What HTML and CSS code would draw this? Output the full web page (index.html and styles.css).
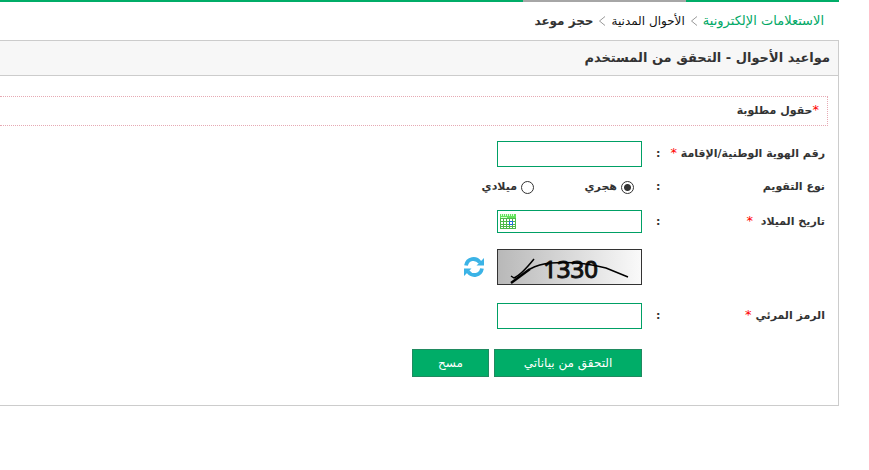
FILE: index.html
```html
<!DOCTYPE html>
<html lang="ar" dir="rtl">
<head>
<meta charset="utf-8">
<title>حجز موعد</title>
<link rel="stylesheet" href="styles.css">
</head>
<body>
<div class="page">
  <div class="nav-line"><span class="nav-first"></span><span class="nav-current"></span><span class="nav-rest"></span></div>
  <nav class="breadcrumb">
    <a class="crumb-root" href="#">الاستعلامات الإلكترونية</a>
    <svg class="chevron" viewBox="0 0 6 10"><path d="M6 0.5 0.5 5 6 9.5"/></svg>
    <a class="crumb-link" href="#">الأحوال المدنية</a>
    <svg class="chevron" viewBox="0 0 6 10"><path d="M6 0.5 0.5 5 6 9.5"/></svg>
    <span class="crumb-current">حجز موعد</span>
  </nav>
  <main class="panel">
    <h1 class="title">مواعيد الأحوال - التحقق من المستخدم</h1>
    <p class="notice"><span class="star">*</span>حقول مطلوبة</p>
    <form class="form">
      <div class="row">
        <label class="label" for="id-number"><span>رقم الهوية الوطنية/الإقامة <span class="star">*</span></span><span>:</span></label>
        <input class="field" id="id-number" type="text">
      </div>
      <div class="row row-radio" role="radiogroup" aria-labelledby="calendar-label">
        <span class="label" id="calendar-label"><span>نوع التقويم</span><span>:</span></span>
        <div class="radios">
          <label class="option"><input class="radio" type="radio" name="calendar" checked>هجري</label>
          <label class="option"><input class="radio" type="radio" name="calendar">ميلادي</label>
        </div>
      </div>
      <div class="row row-date">
        <label class="label" for="birth-date"><span>تاريخ الميلاد <span class="star star-spaced">*</span></span><span>:</span></label>
        <div class="date-box">
          <input class="date-input" id="birth-date" type="text">
          <button class="icon-button" type="button" aria-label="التقويم">
            <svg width="16" height="16" viewBox="0 0 16 16" shape-rendering="crispEdges">
              <path fill="#4eb84a" d="M0 0h16v15H0z"/>
              <path fill="#63e35c" d="M0 0h16v4H0z"/>
              <path fill="#d9ffd5" d="M1 0h1v2H1zM3 0h1v2H3zM5 0h1v2H5zM7 0h1v2H7zM9 0h1v2H9zM11 0h1v2h-1zM13 0h1v2h-1zM1 3h6v1H1z"/>
              <path fill="#fff" d="M1 5h2v2H1zM4 5h2v2H4zM7 5h2v2H7zM10 5h2v2h-2zM13 5h2v2h-2zM1 8h2v2H1zM4 8h2v2H4zM7 8h2v2H7zM10 8h2v2h-2zM13 8h2v2h-2zM1 11h2v1H1zM4 11h2v1H4zM7 11h2v1H7zM10 11h2v1h-2zM13 11h2v1h-2zM1 13h2v1H1zM4 13h2v1H4zM7 13h2v1H7zM10 13h2v1h-2zM13 13h2v1h-2z"/>
              <path fill="none" stroke="#246bdc" d="M9.500 7.500h3v3h-3z"/>
            </svg>
          </button>
        </div>
      </div>
      <div class="row row-captcha">
        <span class="label"></span>
        <svg class="captcha" viewBox="0 0 145 36" role="img" aria-label="1330">
          <defs><linearGradient id="shade"><stop offset="0" stop-color="#b8b8b8"/><stop offset="1" stop-color="#fafafa"/></linearGradient></defs>
          <rect x="0.500" y="0.500" width="144" height="35" fill="url(#shade)" stroke="#333"/>
          <text class="digits" x="46" y="29">1330</text>
          <path class="scratch" stroke-width="2.400" d="M14 34 33 20"/>
          <path class="scratch" stroke-width="1.500" d="M14 27 17 29Q24 26 37 10M33 20Q42 15 54 14Q80 12 109 19L131 28"/>
        </svg>
        <button class="icon-button refresh" type="button" aria-label="تحديث">
          <svg width="20" height="20" viewBox="0 0 20 20">
            <path fill="none" stroke="#3bb3e6" stroke-width="3.800" d="M2 8.500C3.500 1 12 0 16 5.500M18 11.500C16.500 19 8 20 4 14.500"/>
            <path fill="#3bb3e6" d="M20 1v7.500h-7.500zM0 19v-7.500h7.500z"/>
          </svg>
        </button>
      </div>
      <div class="row">
        <label class="label" for="code"><span>الرمز المرئي <span class="star">*</span></span><span>:</span></label>
        <input class="field" id="code" type="text">
      </div>
      <div class="row row-actions">
        <span class="label"></span>
        <div class="actions">
          <button class="button button-main" type="submit">التحقق من بياناتي</button>
          <button class="button button-reset" type="reset">مسح</button>
        </div>
      </div>
    </form>
  </main>
</div>
</body>
</html>
```
FILE: styles.css
```css
* { box-sizing: border-box; }
body {
  margin: 0;
  background: #fff;
  color: #333;
  font: 11px/20px "DejaVu Sans", sans-serif;
}
.page { margin-right: 30px; }
.nav-line { display: flex; height: 2px; }
.nav-line span { background: #00ad68; }
.nav-line .nav-first { width: 153px; }
.nav-line .nav-current { width: 163px; background: #a6a6a6; }
.nav-line .nav-rest { flex: 1; }
.breadcrumb {
  display: flex;
  align-items: center;
  gap: 6px;
  height: 38px;
  padding-right: 15px;
}
.breadcrumb a { text-decoration: none; }
.breadcrumb .crumb-root { color: #00a866; font-size: 13px; }
.breadcrumb .crumb-link { color: #111; font-size: 12px; }
.crumb-current { font-size: 12px; font-weight: bold; }
.chevron {
  width: 6px;
  height: 10px;
  fill: none;
  stroke: #999;
}
.panel {
  border: 1px solid #ccc;
  border-left: 0;
  padding-bottom: 28px;
}
.title {
  margin: 0;
  padding: 0 8px;
  height: 35px;
  font-size: 13px;
  line-height: 34px;
  background: #f7f7f7;
  border-bottom: 1px solid #ccc;
}
.notice {
  margin: 20px 10px 0 0;
  padding: 4px 8px;
  border: 1px dotted #e6a9b3;
  border-left: 0;
  font-weight: bold;
}
.star { color: #f00; font-size: 13px; font-weight: normal; line-height: 16px; }
.star-spaced { margin-right: 4px; }
.form { padding: 15px 13px 0 0; }
.row {
  display: flex;
  align-items: center;
  margin-bottom: 20px;
}
.label {
  display: flex;
  justify-content: space-between;
  width: 169px;
  margin-left: 14px;
  font-weight: bold;
  white-space: nowrap;
}
.field {
  width: 145px;
  height: 26px;
  padding: 2px 6px;
  border: 1px solid #00a065;
  background: #fff;
  font: inherit;
}
.row:first-child { margin-bottom: 10px; }
.row-radio { margin-bottom: 13px; }
.radios {
  display: flex;
  padding-right: 8px;
}
.option {
  display: flex;
  align-items: center;
  gap: 4px;
  width: 100px;
  font-weight: bold;
}
.radio {
  appearance: none;
  width: 13px;
  height: 13px;
  margin: 0;
  border: 1px solid #333;
  border-radius: 50%;
  background: #fff;
}
.radio:checked { background: radial-gradient(circle, #333 3px, #fff 4px); }
.row-date { margin-bottom: 16px; }
.date-box {
  display: flex;
  align-items: center;
  width: 145px;
  height: 23px;
  padding-left: 2px;
  border: 1px solid #00a065;
}
.date-input {
  flex: 1;
  min-width: 0;
  border: 0;
  padding: 0 4px;
  background: none;
  font: inherit;
}
.icon-button {
  display: flex;
  padding: 0;
  border: 0;
  background: none;
}
.row-captcha { margin-bottom: 18px; }
.captcha { width: 145px; height: 36px; overflow: visible; }
.digits {
  direction: ltr;
  font: 24px "Noto Sans", sans-serif;
  fill: #111;
  stroke: #111;
  stroke-width: 1px;
}
.scratch { fill: none; stroke: #000; }
.refresh { margin-right: 13px; }
.row-actions { margin-bottom: 0; }
.actions { display: flex; gap: 5px; }
.button {
  height: 28px;
  padding: 0;
  border: 1px solid #208a60;
  background: #00ad68;
  color: #fff;
  font: 12px/20px "DejaVu Sans", sans-serif;
}
.button-main { width: 148px; }
.button-reset { width: 77px; }
```
